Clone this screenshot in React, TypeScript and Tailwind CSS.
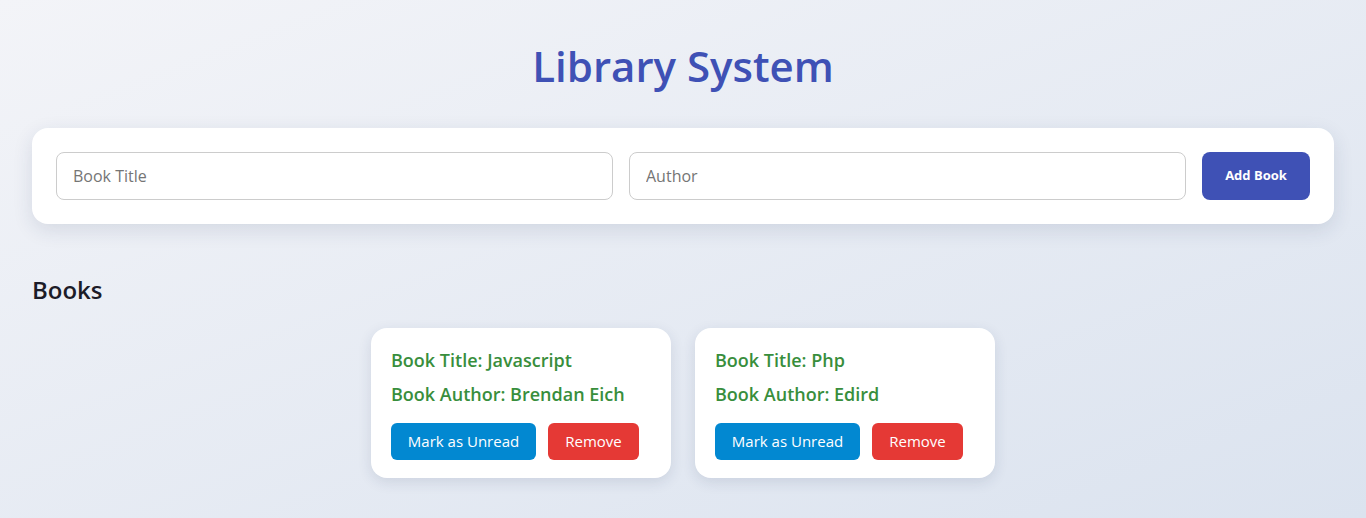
const books = [
  { title: 'Javascript', author: 'Brendan Eich' },
  { title: 'Php', author: 'Edird' },
];

function BookCard({ title, author }: { title: string; author: string }) {
  return (
    <div className="w-[300px] rounded-2xl bg-white px-5 pt-[19px] pb-[18px] shadow-[0_4px_14px_rgba(30,50,90,0.12)]">
      <p className="text-[18px] font-semibold leading-[26px] text-[#388e3c]">Book Title: {title}</p>
      <p className="mt-2 text-[18px] font-semibold leading-[26px] text-[#388e3c]">Book Author: {author}</p>
      <div className="mt-4 flex gap-3">
        <button className="h-[37px] w-[145px] rounded-md bg-[#0288d1] text-[15px] text-white">Mark as Unread</button>
        <button className="h-[37px] w-[91px] rounded-md bg-[#e53935] text-[15px] text-white">Remove</button>
      </div>
    </div>
  );
}

export default function App() {
  return (
    <div className="min-h-[518px] bg-gradient-to-br from-[#f3f4f8] to-[#dbe3ef] px-8 pt-[38px] pb-10 font-['Open_Sans',sans-serif]">
      <h1 className="text-center text-[42px] font-semibold leading-[56px] text-[#3f51b5]">Library System</h1>

      <div className="mt-[34px] flex gap-4 rounded-2xl bg-white p-6 shadow-[0_6px_20px_rgba(30,50,90,0.12)]">
        <input
          className="h-12 flex-1 rounded-lg border border-[#cccccc] px-4 font-['Open_Sans',sans-serif] text-[16px] text-[#333] placeholder:text-[#757575] outline-none"
          placeholder="Book Title"
        />
        <input
          className="h-12 flex-1 rounded-lg border border-[#cccccc] px-4 font-['Open_Sans',sans-serif] text-[16px] text-[#333] placeholder:text-[#757575] outline-none"
          placeholder="Author"
        />
        <button className="h-12 w-[108px] rounded-lg bg-[#3f51b5] text-[13px] font-bold text-white">Add Book</button>
      </div>

      <h2 className="mt-[50px] text-[24px] font-semibold leading-8 text-[#1c1c28]">Books</h2>

      <div className="mt-[22px] flex justify-center gap-6">
        {books.map((b) => (
          <BookCard key={b.title} title={b.title} author={b.author} />
        ))}
      </div>
    </div>
  );
}
